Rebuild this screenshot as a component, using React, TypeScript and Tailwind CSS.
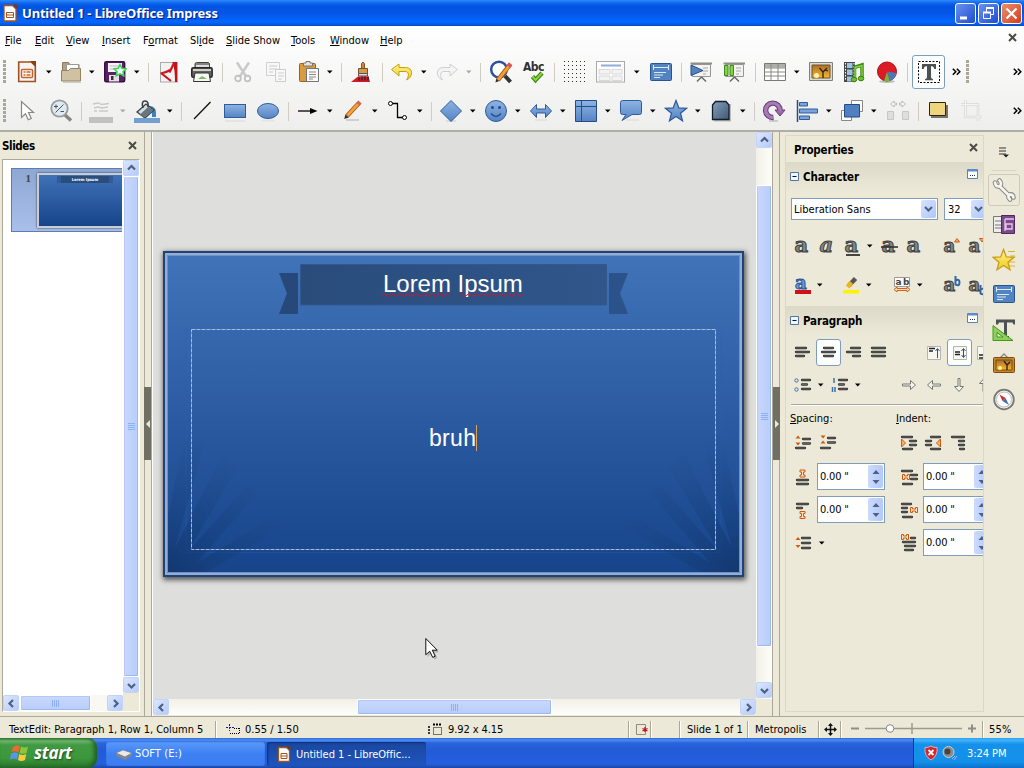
import React from "react";

type IconProps = { w?: number; h?: number; children: React.ReactNode };
const S = ({ w = 24, h = 24, children }: IconProps) => (
  <svg width={w} height={h} viewBox={`0 0 ${w} ${h}`} fill="none" className="block shrink-0">
    {children}
  </svg>
);

const BL = "url(#gBlue)";
const ST = "#2f5d9b";

const Defs = () => (
  <svg width="0" height="0" className="absolute">
    <defs>
      <linearGradient id="gBlue" x1="0" y1="0" x2="0" y2="1">
        <stop offset="0" stopColor="#8fb4e3" />
        <stop offset="1" stopColor="#5483c4" />
      </linearGradient>
      <linearGradient id="gDark" x1="0" y1="0" x2="1" y2="1">
        <stop offset="0" stopColor="#85a0bd" />
        <stop offset="1" stopColor="#3f5872" />
      </linearGradient>
      <linearGradient id="gSun" x1="0" y1="0" x2="0" y2="1">
        <stop offset="0" stopColor="#a8702c" />
        <stop offset="1" stopColor="#fbb62c" />
      </linearGradient>
      <linearGradient id="gYellow" x1="0" y1="0" x2="0" y2="1">
        <stop offset="0" stopColor="#fdf48a" />
        <stop offset="1" stopColor="#f0cb22" />
      </linearGradient>
    </defs>
  </svg>
);

const Grip = () => (
  <S w={3} h={24}>
    {[0, 4, 8, 12, 16, 20].map((y) => (
      <rect key={y} x="0" y={y} width="3" height="3" fill="#aaa796" />
    ))}
  </S>
);
const Arr = ({ dim }: { dim?: boolean }) => (
  <S w={6} h={4}>
    <path d="M0 .5h5.5L2.75 3.5z" fill={dim ? "#aca899" : "#000"} />
  </S>
);
const Sep = () => <div className="h-[19px] w-px bg-[#d0cdc0]" />;
const More = () => (
  <S w={9} h={8}>
    <path d="M.8.8 3.8 3.8.8 6.8M4.8.8l3 3-3 3" stroke="#000" strokeWidth="1.5" />
  </S>
);

const DocIcon = () => (
  <S>
    <path d="M3.7 2h12.6l4 4v15.500H3.700z" fill="#f7f5f3" stroke="#a1501f" strokeWidth="1.6" />
    <path d="M15 1h6v6z" fill="#8a3f12" />
    <rect x="6.500" y="9.500" width="11" height="8" rx="1" fill="#fff" stroke="#c5632a" strokeWidth="1.500" />
    <path d="M8.500 12h2m1 0h4M8.500 15h2m1 0h4" stroke="#c5632a" strokeWidth="1.600" />
  </S>
);
const FolderIcon = () => (
  <S>
    <path d="M3.500 20V2.500h6l1.500 2h9V9" fill="#b3a182" stroke="#8b7a5e" />
    <path d="M7.500 10V4.500h12V10" fill="#fff" stroke="#999" />
    <path d="M2.500 10.500h7l2-2h10v12.500h-19z" fill="#d0c1a2" stroke="#95835f" />
    <path d="M4 22.500h18" stroke="#ccc" />
  </S>
);
const SaveIcon = () => (
  <S>
    <rect x="1.700" y="1.700" width="20" height="20" rx="1.500" fill="#5b2168" stroke="#38103f" strokeWidth="1.400" />
    <rect x="5" y="3" width="14" height="9" fill="#f7f2f8" />
    <path d="M6.500 6h9M6.500 9h8" stroke="#bbb" />
    <rect x="6" y="15" width="10" height="6.500" fill="#e4dfe6" />
    <rect x="8" y="16" width="2.500" height="4" fill="#333" />
    <path d="m17 4.500 2 3.800 4 .6-2.900 2.800.7 4.100-3.800-1.900-3.700 1.900.7-4.100-2.800-2.800 4-.6z" fill="#f2fff2" stroke="#40cf5c" strokeWidth="1.600" />
  </S>
);
const PdfIcon = () => (
  <S>
    <rect x="3.500" y="2.500" width="17" height="19.500" fill="#f2f2f1" stroke="#aaa" />
    <path d="M15.500 2h4.500v20h-2C18 14 17.500 8 15.500 2z" fill="#c50f19" />
    <path d="m17 3-4.500 9.500M3.500 13.500c4-.5 7-1.800 9.500-3.500M4 13l10 8" stroke="#cc1721" strokeWidth="2.200" />
  </S>
);
const PrintIcon = () => (
  <S>
    <path d="m5 3.500 1.500-1h11.500l1.500 1V9h-14.500z" fill="#85857f" stroke="#454540" />
    <path d="M6 6h13" stroke="#ddd" strokeWidth="2" />
    <rect x="1.700" y="7.700" width="20.500" height="9.500" rx="1.500" fill="#636460" stroke="#272826" strokeWidth="1.400" />
    <path d="M3 10h18" stroke="#d1d1cb" strokeWidth="2" />
    <path d="M5 13h14l1.500 8.500h-17z" fill="#f5f7f3" stroke="#333" />
    <path d="m8 19 4-3 5 3z" fill="#83b56b" />
  </S>
);
const CutIcon = () => (
  <S>
    <path d="M6 2.500 15.500 17M18 2.500 8.500 17" stroke="#c9c9c9" strokeWidth="2.500" />
    <circle cx="7" cy="18.500" r="2.800" stroke="#c0c0c0" strokeWidth="1.700" />
    <circle cx="16.500" cy="18.500" r="2.800" stroke="#c0c0c0" strokeWidth="1.700" />
  </S>
);
const CopyIcon = () => (
  <S>
    <path d="M2.500 2.500h13v13h-13z" fill="#f8f8f8" stroke="#d0d0d0" />
    <path d="M5 6h8M5 9h8M5 12h4" stroke="#ccc" />
    <path d="M11.500 9.500h10v12h-10z" fill="#f8f8f8" stroke="#ccc" />
    <path d="M14 13h6M14 16h6M14 19h4" stroke="#ccc" />
  </S>
);
const PasteIcon = () => (
  <S>
    <rect x="2.500" y="3.500" width="16" height="18" rx="1" fill="#d99b42" stroke="#9a6118" />
    <path d="M6.500 6V3h2.500V1.500h4V3h2.500v3z" fill="#e4e4e1" stroke="#777" />
    <path d="M9.500 8.500h12v13h-12z" fill="#fafafa" stroke="#73736f" />
    <path d="M12 12h7M12 14.500h7M12 17h7M12 19h4" stroke="#888" />
  </S>
);
const BrushIcon = () => (
  <S>
    <path d="M11.500 8V3.500q1.500-3 3 0V8" fill="#c48d3c" stroke="#855719" />
    <path d="M8.500 8.500h9v5h-9z" fill="#d39c49" stroke="#795021" />
    <path d="M8.500 13.500h9v2.500h-9z" fill="#dedede" stroke="#555" />
    <path d="m8 16.500-7 5.500h19l-1.500-5.500z" fill="#d51823" />
    <path d="M9 17.500v3m3-4v4m3-4v4m3-4v4" stroke="#44212a" strokeWidth="1.500" />
  </S>
);
const UndoIcon = ({ dim }: { dim?: boolean }) => (
  <S>
    <g transform={dim ? "translate(24 0) scale(-1 1)" : undefined}>
      <path
        d="M9 3.500 1.500 9 9 15.500V11h6c4 0 4.500 4 1.500 8.500 7-3 7-12.500-1-12.500H9z"
        transform="translate(0 .5)"
        fill={dim ? "#f4f4f4" : "url(#gYellow)"}
        stroke={dim ? "#cecece" : "#c59e13"}
      />
    </g>
  </S>
);
const FindIcon = () => (
  <S>
    <path d="m16 16 5.500 6" stroke="#343434" strokeWidth="4" />
    <circle cx="10" cy="9.500" r="7.800" fill="#fff" stroke="#304f9b" strokeWidth="2.500" />
    <path d="M9 20 21.500 4" stroke="#af5f15" strokeWidth="4.500" />
    <path d="M9 20 20 6" stroke="#f7a03b" strokeWidth="2.800" />
    <path d="m19.500 6.500 2.200-2.800" stroke="#e0545b" strokeWidth="4" />
    <path d="m6.500 22.500.7-4 3 2.500z" fill="#333" />
  </S>
);
const AbcIcon = () => (
  <div className="relative h-6 w-6">
    <span className="absolute left-px top-[1px] font-['DejaVu_Sans_Condensed','DejaVu_Sans',sans-serif] text-[12px] leading-3 font-bold tracking-[-0.5px] text-[#333]">Abc</span>
    <span className="absolute left-0 top-0">
      <S>
        <path d="m10.500 16.500 3 3.500 6.500-7" stroke="#39850c" strokeWidth="4.300" />
        <path d="m10.500 16.500 3 3.500 6.500-7" stroke="#8ad544" strokeWidth="2" />
      </S>
    </span>
  </div>
);
const GridIcon = () => (
  <S>
    {[1, 5, 9, 13, 17, 21].map((y) => [1, 5, 9, 13, 17, 21].map((x) => <rect key={`${x}-${y}`} x={x} y={y} width="1" height="1" fill="#30312f" />))}
  </S>
);
const LayoutIcon = () => (
  <S w={30}>
    <rect x="1.500" y="1.500" width="28" height="20.500" fill="#fdfdfd" stroke="#aaa" />
    <path d="M6 5.500h20" stroke="#8fadd6" strokeWidth="2" />
    <path d="M4 9.500h11V14H4zM17 9.500h10V14H17zM4 16h11v4.500H4zM17 16h10v4.500H17z" fill="#f3f3f3" stroke="#d8d8d8" />
  </S>
);
const TextBoxIcon = () => (
  <S>
    <rect x="1.500" y="3.500" width="21" height="17" rx="1" fill="#5283c2" stroke="#29548f" />
    <path d="M4.500 7.500h15M4.500 5v5M19.500 5v5" stroke="#dce9f8" />
    <path d="M5 12.500h12M5 15h9M5 17.500h6" stroke="#dce9f8" />
  </S>
);
const Board = ({ green }: { green?: boolean }) => (
  <S>
    <path d="M1.500 3.500h21.500" stroke="#8c8c88" strokeWidth="2" />
    <path d="M3.500 4.500h18v12h-18z" fill="#f3f3f2" stroke="#969692" />
    <path d="M14 8h5M14 11h5M14 14h3" stroke="#aaa" />
    <path d="m12.500 17-4.500 4.500M12.500 17l4.500 4.500" stroke="#6b6b68" strokeWidth="1.500" />
    {green ? (
      <path d="M2.500 5.500h3.500v10h-3.500zM8 5.500h3.500v10H8z" fill="#86d14a" stroke="#3d8c15" />
    ) : (
      <path d="m2 5 12 5.500-12 5z" fill="#5182c2" stroke="#264f88" />
    )}
  </S>
);
const TableIcon = () => (
  <S>
    <path d="M1.500 3.500h21v17h-21z" fill="#fff" stroke="#777773" />
    <path d="M2 4h20v3.500H2z" fill="#aeaea9" />
    <path d="M1.500 8h21M1.500 12h21M1.500 16h21M8 4v17M15 4v17" stroke="#888884" />
  </S>
);
const ImageIcon = () => (
  <S>
    <path d="M.5 2.500h23v18H.5z" fill="#d9d9d7" stroke="#80807c" />
    <path d="M3 5h18v13H3z" fill="url(#gSun)" stroke="#705227" />
    <circle cx="7.500" cy="15.500" r="2.500" fill="#fff3a2" />
    <path d="M14 18v-6l-3.500-4M14 12l4-4M16 10l3 1" stroke="#2b2113" strokeWidth="1.300" />
  </S>
);
const FilmIcon = () => (
  <S>
    <path d="M2 2h11v20H2z" fill="#45494b" />
    <path d="M5 3h5.500v5H5zM5 9.500h5.500v5.500H5zM5 16.500h5.500v5H5z" fill="#9cc3df" />
    <path d="M3.500 3v18M12 3v18" stroke="#fff" strokeDasharray="1.500 1.500" />
    <path d="M12 7.500 20 5v13" stroke="#3e8a12" strokeWidth="3.500" />
    <path d="M13 8v11" stroke="#3e8a12" strokeWidth="2.500" />
    <path d="m12.500 7.500 7.500-2V18M13 8v11" stroke="#8cd44b" strokeWidth="1.300" />
    <ellipse cx="12" cy="19.500" rx="2.800" ry="2.300" fill="#72bc33" stroke="#39800f" />
    <ellipse cx="19" cy="18.500" rx="2.800" ry="2.300" fill="#72bc33" stroke="#39800f" />
  </S>
);
const ChartIcon = () => (
  <S>
    <ellipse cx="12" cy="21.500" rx="8" ry="1.500" fill="#bbb" />
    <circle cx="12" cy="11.500" r="9.500" fill="#dc1b24" stroke="#a81018" />
    <path d="m12 11.500 9.500 1.500q-1 6-6.500 7.800z" fill="#4a78b8" />
    <path d="m12 12 3 9.200q-3 .8-6-.2z" fill="#6fb83c" />
  </S>
);
const TButton = () => (
  <div className="flex h-[34px] w-[33px] items-center justify-center rounded-[3px] border border-[#7b9ebd] bg-white">
    <S>
      <rect x="1.500" y="1.500" width="21" height="21" stroke="#000" strokeDasharray="2 1.500" />
      <path d="M5 4h14v5h-1.700q-.3-2.700-2.300-2.700h-1V17q0 2 2 2.200v1H8v-1q2-.2 2-2.200V6.300H9Q7 6.300 6.700 9H5z" fill="#4d5051" />
    </S>
  </div>
);

const PointerIcon = () => (
  <S>
    <path d="M5.500 2.500v16l4-3.700 2.800 6 3-1.300-2.800-6h5z" fill="#fff" stroke="#878787" strokeWidth="1.200" />
  </S>
);
const ZoomIcon = () => (
  <S>
    <path d="m16 16 6 5.500" stroke="#858585" strokeWidth="3.500" />
    <circle cx="10.500" cy="9.500" r="8.200" fill="#dceaf6" stroke="#9b9b98" strokeWidth="1.800" />
    <path d="M5 7.500h4M7 5.500v4M6.500 13.500l8-8M11.500 12.500H15" stroke="#555" />
  </S>
);
const LineColor = () => (
  <S>
    <path d="m4 5 5-1 4 1.500 7-1M5 9l4-1 4 1 6-1M5 12h3m2 0h9" stroke="#c9c9c9" strokeWidth="1.300" />
    <path d="M0 18h24v6H0z" fill="#c1c1c1" />
  </S>
);
const BucketIcon = () => (
  <S w={26}>
    <path d="M16 7q7 0 6 11h-4q1-8-5-9z" fill="#3683bd" />
    <path d="m3 13 9-8 8 6-9 8z" fill="#d5dcdf" stroke="#37434a" strokeWidth="1.300" />
    <path d="m6 15.500 8.500-8 5 4-9 7z" fill="#667780" />
    <path d="M9 9q-2-7 2-7 4 0 3 6" stroke="#2f383e" strokeWidth="1.500" />
    <path d="M0 19h26v5.500H0z" fill="#729fcf" />
  </S>
);
const PencilIcon = () => (
  <S>
    <path d="M5 21h13" stroke="#c4c4c4" strokeWidth="1.500" />
    <path d="m6 17 12-13" stroke="#a95d16" strokeWidth="4.600" />
    <path d="M6.500 16.500 17 5" stroke="#f7a13d" strokeWidth="2.700" />
    <path d="m17.200 5 1.800-2" stroke="#e25b5f" strokeWidth="4.300" />
    <path d="m3.200 20 1.200-4.500 3.400 3.100z" fill="#363028" />
  </S>
);
const SparkStar = ({ fill, stroke }: { fill: string; stroke: string }) => (
  <path d="m12 1.500 2.800 7.400 7.700.4-6 4.900 2 7.500-6.500-4.200-6.500 4.200 2-7.500-6-4.900 7.700-.4z" fill={fill} stroke={stroke} strokeWidth="1.300" />
);
const RotateIcon = () => (
  <S>
    <path d="M7 22h9" stroke="#ccc" strokeWidth="2" />
    <path d="M11.500 18.500A7.200 7.200 0 1 1 18 11.500" stroke="#68397a" strokeWidth="5.400" />
    <path d="M13 11h10l-5 6z" fill="#9a6aa6" stroke="#68397a" />
    <path d="M11 18.500A7.200 7.200 0 1 1 18 12" stroke="#a87bb4" strokeWidth="3.400" />
  </S>
);

type Item = [string, React.ReactNode];

const row1: Item[] = [
  ["ml-[3px]", <Grip />], ["ml-[9px]", <DocIcon />], ["ml-[7px]", <Arr />], ["ml-[7px]", <FolderIcon />], ["ml-[6px]", <Arr />],
  ["ml-[8px]", <SaveIcon />], ["ml-[7px]", <Arr />], ["ml-[8px]", <Sep />], ["ml-[8px]", <PdfIcon />], ["ml-[9px]", <PrintIcon />],
  ["ml-[8px]", <Sep />], ["ml-[8px]", <CutIcon />], ["ml-[9px]", <CopyIcon />], ["ml-[9px]", <PasteIcon />], ["ml-[6px]", <Arr />],
  ["ml-[8px]", <Sep />], ["ml-[8px]", <BrushIcon />], ["ml-[8px]", <Sep />], ["ml-[7px]", <UndoIcon />], ["ml-[7px]", <Arr />],
  ["ml-[8px]", <UndoIcon dim />], ["ml-[7px]", <Arr dim />], ["ml-[8px]", <Sep />], ["ml-[8px]", <FindIcon />], ["ml-[9px]", <AbcIcon />],
  ["ml-[8px]", <Sep />], ["ml-[8px]", <GridIcon />], ["ml-[8px]", <LayoutIcon />], ["ml-[9px]", <Arr />], ["ml-[9px]", <TextBoxIcon />],
  ["ml-[8px]", <Sep />], ["ml-[7px]", <Board />], ["ml-[9px]", <Board green />], ["ml-[9px]", <Sep />], ["ml-[7px]", <TableIcon />],
  ["ml-[7px]", <Arr />], ["ml-[9px]", <ImageIcon />], ["ml-[9px]", <FilmIcon />], ["ml-[9px]", <ChartIcon />], ["ml-[8px]", <Sep />],
  ["ml-[4px]", <TButton />], ["ml-[7px]", <More />], ["ml-[5px]", <Grip />], ["ml-[44px]", <More />],
];

const row2: Item[] = [
  ["ml-[3px]", <Grip />],
  ["ml-[10px]", <PointerIcon />],
  ["ml-[9px]", <ZoomIcon />],
  ["ml-[8px]", <Sep />],
  ["ml-[7px]", <LineColor />],
  ["ml-[7px]", <Arr dim />],
  ["ml-[8px]", <BucketIcon />],
  ["ml-[7px]", <Arr />],
  ["ml-[8px]", <Sep />],
  ["ml-[8px]", <S><path d="M4 20 20.500 3" stroke="#111" strokeWidth="1.300" /></S>],
  ["ml-[9px]", <S><path d="M2 22h20" stroke="#e4e4e4" strokeWidth="2" /><rect x="1.500" y="5.500" width="21" height="13" fill={BL} stroke={ST} /></S>],
  ["ml-[9px]", <S><path d="M5 21.500h14" stroke="#e4e4e4" strokeWidth="2" /><ellipse cx="12" cy="12" rx="10.500" ry="7.500" fill={BL} stroke={ST} /></S>],
  ["ml-[8px]", <Sep />],
  ["ml-[6px]", <S><path d="M3 12h13" stroke="#000" strokeWidth="1.300" /><path d="m15 9 7.500 3-7.500 3z" fill="#000" /></S>],
  ["ml-[8px]", <Arr />],
  ["ml-[8px]", <PencilIcon />],
  ["ml-[7px]", <Arr />],
  ["ml-[8px]", <S><path d="M5 4.500h6.500v14H17" stroke="#000" strokeWidth="1.300" /><circle cx="4.500" cy="4.500" r="2" fill="#fff" stroke="#000" /><circle cx="18.500" cy="18.500" r="2" fill="#fff" stroke="#000" /></S>],
  ["ml-[7px]", <Arr />],
  ["ml-[8px]", <Sep />],
  ["ml-[7px]", <S><path d="M7 22h10" stroke="#ddd" strokeWidth="2" /><path d="M12 1.500 22.500 12 12 22.500 1.500 12z" fill={BL} stroke={ST} /></S>],
  ["ml-[7px]", <Arr />],
  ["ml-[8px]", <S><circle cx="12" cy="12" r="10.500" fill={BL} stroke={ST} /><path d="M7 14.500q5 6 10 0" stroke="#234c86" strokeWidth="1.300" /><circle cx="8.500" cy="8.500" r="1.500" fill="#234c86" /><circle cx="15.500" cy="8.500" r="1.500" fill="#234c86" /></S>],
  ["ml-[7px]", <Arr />],
  ["ml-[8px]", <S><path d="M6 21h12" stroke="#e4e4e4" strokeWidth="2" /><path d="m1.500 12 6-6.500V10h9V5.500l6 6.500-6 6.500V14h-9v4.500z" fill={BL} stroke={ST} /></S>],
  ["ml-[7px]", <Arr />],
  ["ml-[8px]", <S><path d="M1.500 1.500h21v21h-21z" fill={BL} stroke="#244d86" /><path d="M7.500 1.500v21M1.500 7.500h21" stroke="#244d86" /></S>],
  ["ml-[7px]", <Arr />],
  ["ml-[8px]", <S><path d="M7 21h13" stroke="#e4e4e4" strokeWidth="2" /><path d="M3.500 1.500h17q2 0 2 2v10q0 2-2 2H13L3 21.500l4-6H3.500q-2 0-2-2v-10q0-2 2-2z" fill={BL} stroke={ST} /></S>],
  ["ml-[7px]", <Arr />],
  ["ml-[8px]", <S><SparkStar fill={BL} stroke={ST} /></S>],
  ["ml-[7px]", <Arr />],
  ["ml-[8px]", <S><path d="M5 21.500h16V5" stroke="#bbb" strokeWidth="2" /><path d="m3.500 6 3-3.500H17l3 3.500v14.500H3.500z" fill="url(#gDark)" stroke="#111d28" strokeWidth="1.300" /></S>],
  ["ml-[7px]", <Arr />],
  ["ml-[8px]", <Sep />],
  ["ml-[7px]", <RotateIcon />],
  ["ml-[9px]", <S><path d="M2.500 1v22" stroke="#244d86" strokeWidth="1.500" /><path d="M4.500 3.500h8v3.500h-8zM4.500 10h18v4h-18zM4.500 17h10v3.500h-10z" fill="#7aa4da" stroke={ST} /></S>],
  ["ml-[7px]", <Arr />],
  ["ml-[8px]", <S><path d="M11.500 1.500h11v11h-11zM1.500 11.500h10v10h-10z" fill="#fff" stroke="#888" /><path d="M4.500 5.500h15v12.500h-15z" fill="#4f80c1" stroke="#234b84" /></S>],
  ["ml-[7px]", <Arr />],
  ["ml-[9px]", <S><path d="M1.500 12.500h6v8h-6zM16.500 12.500h6v8h-6z" fill="#dedede" stroke="#c7c7c7" /><path d="m4.500 5 3.500-3v2h2.500v2H8v2zM19.500 5 16 2v2h-2.500v2H16v2z" fill="#f6f6f6" stroke="#bbb" /></S>],
  ["ml-[8px]", <Sep />],
  ["ml-[7px]", <S><path d="M5 6h17v13H5z" fill="#77736b" /><path d="M3.500 3.500h16v13h-16z" fill="#efd57c" stroke="#28231a" /></S>],
  ["ml-[10px]", <S><path d="M5.500 1v17H22M1 5.500h17V22" stroke="#d7d7d7" strokeWidth="2.500" /><path d="M5.500 1v17H22M1 5.500h17V22" stroke="#f5f5f5" /></S>],
  ["ml-[29px]", <More />],
];

const Row = ({ items }: { items: Item[] }) => (
  <>
    {items.map(([c, n], i) => (
      <div key={i} className={`${c} shrink-0`}>
        {n}
      </div>
    ))}
  </>
);

const CloseX = () => (
  <S w={9} h={9}>
    <path d="m1 1 7 7M8 1 1 8" stroke="#4b4a45" strokeWidth="2" />
  </S>
);

const SBtn = ({ d }: { d: "up" | "down" | "left" | "right" }) => {
  const p = { up: "m4 8.500 3.500-3.500L11 8.500", down: "M4 6l3.500 3.500L11 6", left: "M9 4 5.500 7.500 9 11", right: "m6 4 3.500 3.500L6 11" }[d];
  return (
    <div className="flex h-4 w-4 shrink-0 items-center justify-center rounded-[2px] border border-[#c3d3f6] bg-gradient-to-br from-[#dce6fe] to-[#b4cbfa]">
      <S w={15} h={15}>
        <path d={p} stroke="#4d6185" strokeWidth="2.200" />
      </S>
    </div>
  );
};
const ThumbV = ({ c }: { c: string }) => (
  <div className={`${c} flex shrink-0 items-center justify-center rounded-[2px] border border-white bg-gradient-to-r from-[#c9d8fd] to-[#b8cdfb] shadow-[inset_-1px_-1px_0_#9cb8ec,inset_1px_0_0_#b3c8f5]`}>
    <div className="flex flex-col gap-px">
      <div className="h-px w-[7px] bg-[#8cb0f8]" /><div className="h-px w-[7px] bg-[#8cb0f8]" /><div className="h-px w-[7px] bg-[#8cb0f8]" /><div className="h-px w-[7px] bg-[#8cb0f8]" />
    </div>
  </div>
);
const ThumbH = ({ c }: { c: string }) => (
  <div className={`${c} flex h-4 shrink-0 items-center justify-center rounded-[2px] border border-white bg-gradient-to-b from-[#c9d8fd] to-[#b8cdfb] shadow-[inset_-1px_-1px_0_#9cb8ec,inset_1px_1px_0_#b3c8f5]`}>
    <div className="flex gap-px">
      <div className="h-[7px] w-px bg-[#8cb0f8]" /><div className="h-[7px] w-px bg-[#8cb0f8]" /><div className="h-[7px] w-px bg-[#8cb0f8]" /><div className="h-[7px] w-px bg-[#8cb0f8]" />
    </div>
  </div>
);

const menus: [string, string, string, string][] = [
  ["w-[30px]", "", "F", "ile"], ["w-[31px]", "", "E", "dit"], ["w-[36px]", "", "V", "iew"], ["w-[41px]", "", "I", "nsert"],
  ["w-[47px]", "F", "o", "rmat"], ["w-[36px]", "Sl", "i", "de"], ["w-[65px]", "", "S", "lide Show"], ["w-[39px]", "", "T", "ools"],
  ["w-[50px]", "", "W", "indow"], ["w-[40px]", "", "H", "elp"],
];

const Rays = () => (
  <path
    d="M5 321V263L22 187 45 179 12 297 61 201 75 216 24 302 84 234 95 241 34 312 110 266 124 274 44 321z"
    fill="url(#gRay)"
  />
);

const SlideArt = () => (
  <svg width="581" height="326" viewBox="0 0 581 326" className="absolute left-0 top-0">
    <defs>
      <radialGradient id="gRay" gradientUnits="userSpaceOnUse" cx="5" cy="321" r="145">
        <stop offset="0" stopColor="#12366b" stopOpacity=".85" />
        <stop offset=".4" stopColor="#143c76" stopOpacity=".42" />
        <stop offset=".75" stopColor="#18427f" stopOpacity=".16" />
        <stop offset="1" stopColor="#1b478a" stopOpacity="0" />
      </radialGradient>
      <linearGradient id="gRib" x1="0" y1="0" x2="1" y2="0">
        <stop offset="0" stopColor="#294c7b" />
        <stop offset="1" stopColor="#30568b" />
      </linearGradient>
    </defs>
    <path d="M23 76V302M558 76V302M23 301.500H558" stroke="#2b62b2" strokeOpacity=".35" />
    <Rays />
    <g transform="translate(581 0) scale(-1 1)"><Rays /></g>
    <path d="M137.500 13.500h306v40.500h-306z" fill="url(#gRib)" stroke="#31598f" />
    <path d="M116 22h19v41h-19l8-20.500z" fill="#26497a" />
    <path d="M446 22h19l-8 20.500 8 20.500h-19z" fill="#2c5389" />
    <rect x="28.500" y="78.500" width="524" height="220" stroke="#a8bdd8" strokeDasharray="4 1" fill="none" />
  </svg>
);

const Slide = () => (
  <div className="relative h-[326px] w-[581px] bg-gradient-to-b from-[#4174b9] via-[#2c5ba1] to-[#16448a] shadow-[1px_2px_5px_1px_rgba(0,0,0,0.6)]">
    <SlideArt />
    <div className="absolute inset-0 border-2 border-[#1f4378] shadow-[inset_0_0_0_2px_#94add5,inset_0_0_0_3px_#6f90c5]" />
    <div className="absolute left-[220px] top-[19px] font-['Liberation_Sans',Arial,sans-serif] text-[24px] leading-[28px] tracking-[-0.03px] whitespace-nowrap text-white">Lorem Ipsum</div>
    <svg width="142" height="4" className="absolute left-[219px] top-[42px]">
      <path d={"M0 2" + "q2-3 4 0t4 0".repeat(8) + "q2-3 4 0"} fill="none" stroke="#d4142a" />
      <path d={"M77 2" + "q2-3 4 0t4 0".repeat(8)} fill="none" stroke="#d4142a" />
    </svg>
    <div className="absolute left-[266px] top-[173px] font-['Liberation_Sans',Arial,sans-serif] text-[23px] leading-[28px] tracking-[0.3px] whitespace-nowrap text-white">bruh</div>
    <div className="absolute left-[313px] top-[174px] h-[26px] w-px bg-[#dfa355]" />
  </div>
);

const Hdr = ({ t }: { t: string }) => (
  <div className="flex h-[29px] items-center bg-gradient-to-b from-[#dcd9c9] to-[#ece9d8] pl-[4px]">
    <S w={9} h={9}>
      <path d="M.5.5h8v8h-8z" fill="#f1f5fc" stroke="#53749f" /><path d="M2.500 4.500h4" stroke="#111" />
    </S>
    <span className="ml-[4px] w-[164px] text-[11.5px] font-bold tracking-[-0.15px]">{t}</span>
    <div className="mb-[5px]">
      <S w={11} h={10}>
        <path d="M.5.5h10v9H.5z" fill="#fff" stroke="#5d82b5" /><path d="M1 1.500h9" stroke="#5d8ed0" strokeWidth="2" /><path d="M3 6.500h1m1 0h1m1 0h1" stroke="#234" />
      </S>
    </div>
  </div>
);

const A = ({ kind }: { kind?: string }) => {
  const narrow = kind === "sup" || kind === "sub";
  return (
    <S w={22} h={24}>
      <g fontFamily="'DejaVu Serif', serif" fontWeight="bold" fill="#858782" stroke="#3f413f" strokeWidth="1">
        <text x={narrow ? 0.5 : 2.500} y="18" fontSize={kind === "up" || kind === "dn" || narrow ? 18 : 21} fontStyle={kind === "i" ? "italic" : undefined}>a</text>
      </g>
      {kind === "u" && <path d="M4 21h14" stroke="#333" strokeWidth="1.800" />}
      {kind === "s" && <path d="M2 13h17" stroke="#333" strokeWidth="1.600" />}
      {kind === "up" && <path d="m13.500 8 2.500-3.500L18.500 8z" fill="#f5ad70" stroke="#ce5f16" />}
      {kind === "dn" && <path d="m13.500 4.500L16 8l2.500-3.500z" fill="#f5ad70" stroke="#ce5f16" />}
      {narrow && (
        <path
          d="M13 0v9M13 4.500q4-2 4 2t-4 2"
          transform={kind === "sup" ? "translate(-.5 3)" : "translate(-.5 12)"}
          stroke="#3465a4"
          strokeWidth="2"
        />
      )}
    </S>
  );
};
const ACol = () => (
  <S w={22} h={24}>
    <text x="3" y="16" fontSize="18" fontFamily="'DejaVu Serif', serif" fontWeight="bold" fill="#6c9bd6" stroke="#28569a" strokeWidth="1">a</text>
    <path d="M3 17h16v4H3z" fill="#d01218" />
  </S>
);
const Hi = () => (
  <S w={22} h={24}>
    <path d="m9 12.500 6.500-7" stroke="#555" strokeWidth="4.500" /><path d="m7.500 14 4-4.500" stroke="#ebb51c" strokeWidth="4.500" /><path d="M3 17h16v3.500H3z" fill="#fff200" />
  </S>
);
const AB = () => (
  <S w={22} h={24}>
    <path d="M3.500 4.500h15v9h-15z" fill="#fff" stroke="#999" />
    <text x="4.500" y="12" fontSize="9" fontWeight="bold" fontFamily="'DejaVu Sans', sans-serif" fill="#444">a</text>
    <text x="12" y="12" fontSize="9" fontWeight="bold" fontFamily="'DejaVu Sans', sans-serif" fill="#444">b</text>
    <path d="m3 16.500 3-2.500v1.500h10V14l3 2.500-3 2.500v-1.500H6V19z" fill="#fbd7b5" stroke="#cf651a" />
  </S>
);
const Bars = ({ d, children, w = 20 }: { d: string; children?: React.ReactNode; w?: number }) => (
  <S w={w} h={20}>
    <path d={d} stroke="#30312f" strokeWidth="2.300" strokeLinecap="round" />
    <path d={d} stroke="#787a75" strokeWidth=".7" strokeLinecap="round" />
    {children}
  </S>
);
const O = "#cc5c12";
const Combo = ({ c, t, b }: { c: string; t: string; b: string }) => (
  <div className={`${c} flex h-[22px] shrink-0 items-center justify-between border border-[#7f9db9] bg-white pr-px pl-[2px]`}>
    <span className={b}>{t}</span>
    <div className="flex h-[18px] w-[15px] items-center justify-center rounded-[2px] bg-gradient-to-br from-[#d8e3fd] to-[#aec6f7]">
      <S w={9} h={6}><path d="m1 1 3.500 3.500L8 1" stroke="#4d6185" strokeWidth="2.100" /></S>
    </div>
  </div>
);
const Spin = () => (
  <div className="flex h-[27px] w-[68px] shrink-0 items-center justify-between border border-[#7f9db9] bg-white pr-px pl-[2px]">
    <span className="pt-px tracking-[-0.2px]">0.00 "</span>
    <div className="flex h-[23px] w-[15px] flex-col items-center justify-center gap-[6px] rounded-[2px] bg-gradient-to-r from-[#ccdafd] to-[#b3c9f8]">
      <S w={8} h={4}><path d="M4 0 7.500 4h-7z" fill="#4d6185" /></S>
      <S w={8} h={4}><path d="M.5 0h7L4 4z" fill="#4d6185" /></S>
    </div>
  </div>
);
const ArrowG = ({ r }: { r: string }) => (
  <S w={16} h={16}>
    <path d="M1.500 7h8V3.500L14.500 8l-5 4.500V9h-8z" transform={r} fill="#f5f4ee" stroke="#777871" />
  </S>
);
const VBox = ({ k }: { k: number }) => (
  <S w={16} h={18}>
    <path d="M1.500 2.500h13v13h-13z" fill="#f7f6f1" stroke="#b5b4ae" />
    <path d={k === 0 ? "M3 4.500h6M3 7h4" : k === 1 ? "M3 8h5M3 10.500h5" : "M3 11h6M3 14h6"} stroke="#222" strokeWidth="1.500" />
    <path d={k === 0 ? "M11.500 14V5m-2 2 2-2.500 2 2.500" : "M11.500 5v8m-2-6 2-2.500 2 2.500m-4 4 2 2.500 2-2.500"} stroke="#24568b" />
  </S>
);
const SelBox = ({ children }: { children: React.ReactNode }) => (
  <div className="flex h-[27px] w-[25px] shrink-0 items-center justify-center rounded-[3px] border border-[#7b9ebd] bg-white">{children}</div>
);
const IBeam = ({ t }: { t: string }) => (
  <path d="M-2 0h5v2h-1.500v3H3v2h-5V5h1.500V2H-2z" transform={t} fill="#fae0c5" stroke={O} />
);

const Sidebar = () => (
  <div className="mt-[3px] ml-[5px] flex h-[577px] w-[199px] shrink-0 flex-col overflow-hidden border border-[#dbd8c9] bg-[#ece9d8]">
    <div className="flex h-[26px] shrink-0 items-center pl-[8px]">
      <span className="w-[175px] pt-[2px] text-[11.5px] font-bold tracking-[-0.15px]">Properties</span>
      <div className="mb-1"><CloseX /></div>
    </div>
    <Hdr t="Character" />
    <div className="mt-[7px] flex pl-[5px]">
      <Combo c="w-[147px]" t="Liberation Sans" b="pt-px tracking-[0px]" />
      <Combo c="ml-[6px] w-[44px]" t="32" b="pt-px pl-[1px]" />
    </div>
    <div className="mt-[14px] flex h-6 items-center pl-[6px]">
      <A /><div className="ml-[3px]"><A kind="i" /></div><div className="ml-[3px]"><A kind="u" /></div><div className="ml-[3px]"><Arr /></div>
      <div className="ml-[6px]"><A kind="s" /></div><div className="ml-[3px]"><A /></div><div className="ml-[15px]"><A kind="up" /></div><div className="ml-[3px]"><A kind="dn" /></div>
    </div>
    <div className="mt-[15px] flex h-6 items-center pl-[6px]">
      <ACol /><div className="ml-[3px]"><Arr /></div><div className="ml-[17px]"><Hi /></div><div className="ml-[4px]"><Arr /></div>
      <div className="ml-[19px]"><AB /></div><div className="ml-[4px]"><Arr /></div><div className="ml-[20px]"><A kind="sup" /></div><div className="ml-[3px]"><A kind="sub" /></div>
    </div>
    <div className="mt-[9px]"><Hdr t="Paragraph" /></div>
    <div className="mt-[4px] flex h-[27px] items-center pl-[7px]">
      <Bars d="M3 5h10M3 9h13M3 13h8" />
      <div className="ml-[3px]"><SelBox><Bars d="M5 5h9M3 9h13M5 13h9" /></SelBox></div>
      <div className="ml-[3px]"><Bars d="M7 5h9M3 9h13M9 13h7" /></div>
      <div className="ml-[5px]"><Bars d="M3 5h13M3 9h13M3 13h13" /></div>
      <div className="ml-[37px]"><VBox k={0} /></div><div className="ml-[5px]"><SelBox><VBox k={1} /></SelBox></div><div className="ml-[4px]"><VBox k={2} /></div>
    </div>
    <div className="mt-[7px] flex h-6 items-center pl-[7px]">
      <Bars d="M9 5h8M9 9.500h5M9 14h8"><circle cx="3.500" cy="5.500" r="1.700" stroke="#3c70b5" /><circle cx="3.500" cy="14.500" r="1.700" stroke="#3c70b5" /></Bars>
      <div className="ml-[5px]"><Arr /></div>
      <div className="ml-[6px]"><Bars d="M9 5h8M9 9.500h5M9 14h8"><path d="M4 3v5M2.500 12v5m2.500-5v5" stroke="#3c70b5" strokeWidth="1.500" /></Bars></div>
      <div className="ml-[5px]"><Arr /></div>
      <div className="ml-[40px]"><ArrowG r="" /></div><div className="ml-[9px]"><ArrowG r="rotate(180 8 8)" /></div><div className="ml-[9px]"><ArrowG r="rotate(90 8 8)" /></div><div className="ml-[9px]"><ArrowG r="rotate(-90 8 8)" /></div>
    </div>
    <div className="mt-[7px] ml-[5px] h-[2px] shrink-0 border-t border-b border-t-[#aca899] border-b-white" />
    <div className="mt-[5px] flex h-[15px] items-center pl-[4px] tracking-[0px]">
      <div className="w-[106px]"><u>S</u>pacing:</div><div><u>I</u>ndent:</div>
    </div>
    <div className="mt-[7px] flex h-[20px] items-center pl-[7px]">
      <Bars d="M10 6h7M10 10.500h7M3 15h9"><path d="m5 2.500 2.500 3h-5zM5 12.500 2.500 9.500h5z" fill={O} /></Bars>
      <div className="ml-[5px]"><Bars d="M10 5h7M10 9.500h7M3 15h9"><path d="M2.500 2.500h5L5 5.500zM2.500 10.500h5L5 7.500z" fill={O} /></Bars></div>
      <div className="ml-[61px]"><Bars d="M3 4h10M11 8h6M11 12h6M4 16h9"><path d="m2.500 6 4 4-4 4z" fill="#f5b174" stroke={O} /></Bars></div>
      <div className="ml-[5px]"><Bars d="M7 4h9M2 8h5M2 12h5M7 16h9"><path d="m16.500 6-4 4 4 4z" fill="#f5b174" stroke={O} /></Bars></div>
      <div className="ml-[5px]"><Bars d="M3 4h12M10 8h5M10 12h5M11 16h4" /></div>
    </div>
    <div className="mt-[10px] flex h-[27px] items-center pl-[7px]">
      <Bars d="M4 13h11M4 17h11"><IBeam t="translate(9 3)" /></Bars><div className="ml-[4px]"><Spin /></div>
      <div className="ml-[14px]"><Bars d="M3 4h10M12 8h6M12 12h6M4 17h9"><IBeam t="translate(3.500 10.500) rotate(-90)" /></Bars></div><div className="ml-[4px]"><Spin /></div>
    </div>
    <div className="mt-[6px] flex h-[27px] items-center pl-[7px]">
      <Bars d="M4 4h11M4 8h5"><IBeam t="translate(9 11.500)" /></Bars><div className="ml-[4px]"><Spin /></div>
      <div className="ml-[14px]"><Bars d="M3 4h9M3 8h5M3 12h5M4 17h9"><IBeam t="translate(11.500 10.500) rotate(-90)" /></Bars></div><div className="ml-[4px]"><Spin /></div>
    </div>
    <div className="mt-[6px] flex h-[27px] items-center pl-[7px]">
      <Bars d="M9 5h8M9 10h8M9 15h8"><path d="m5 4 2.500 3h-5zM5 15 2.500 12h5z" fill={O} /></Bars><div className="ml-[6px]"><Arr /></div>
      <div className="ml-[74px]"><Bars d="M12 5h4M4 9h12M6 13h10M6 17h8"><IBeam t="translate(2.500 4.500) rotate(-90)" /></Bars></div><div className="ml-[4px]"><Spin /></div>
    </div>
  </div>
);

const Wrench = () => {
  const d = "M3 4.500Q3.500 9 7.500 8.500 10.500 6 7.500 2.500M7.500 8 17 17.500M21.500 19.500q-.5-3.500-4-3-2.500 2 .5 5";
  return (
    <S>
      <path d={d} stroke="#8a8a84" strokeWidth="4.600" strokeLinecap="round" />
      <path d={d} stroke="#f6f5f0" strokeWidth="2.600" strokeLinecap="round" />
    </S>
  );
};

const TabBar = () => (
  <div className="flex w-[40px] shrink-0 flex-col items-center bg-[#ece9d8] pt-[14px]">
    <S w={12} h={12}><path d="M1 2h7M1 5h7M1 8h7" stroke="#333" /><path d="M5 8.500h6L8 11.500z" fill="#15202f" /></S>
    <div className="mt-[12px] h-px w-[24px] bg-[#d9d6c8]" />
    <div className="mt-[3px] flex h-[32px] w-[32px] items-center justify-center rounded-[3px] border border-[#cdcaba]">
      <Wrench />
    </div>
    <div className="mt-[7px]"><S><path d="M1.500 3.500h9v16h-9z" fill="#eee" stroke="#777" /><path d="M3 8h6M3 12h6M3 15h6" stroke="#777" /><path d="M9.500 2.500h13v18h-13z" fill="#7d4a8c" stroke="#542561" /><path d="M13 6v12M13 6h9M14 11h6v5h-6z" stroke="#e3cbe9" strokeWidth="1.300" /></S></div>
    <div className="mt-[11px]"><S><path d="M16 3.500h7M18 8h5M17 14h6M17 18h6" stroke="#d8b52c" /><g transform="translate(-.5 0)"><SparkStar fill="url(#gYellow)" stroke="#c99c16" /></g></S></div>
    <div className="mt-[10px]"><TextBoxIcon /></div>
    <div className="mt-[12px]"><S><path d="M4 1.500h19v5h-1.500l-1-2H15V18h2v1.500H10V18h2V4.500H7l-1 2H4z" fill="#4b5255" /><path d="M1 7.500V22.500h20z" fill="#8ad15a" stroke="#4a951f" /><path d="M5 14.500v4.500h6z" fill="#d9f2ca" stroke="#4a951f" /></S></div>
    <div className="mt-[10px]"><S><path d="m8 6 4-4 4 4" stroke="#888" strokeWidth="1.300" /><rect x="1.500" y="5.500" width="21" height="15" rx="1" fill="#c3862a" stroke="#7c4a0b" /><path d="M4 8h16v10H4z" fill="url(#gSun)" stroke="#774c15" /><path d="M15 18v-5l-3-4m3 4 3-3" stroke="#2b2113" strokeWidth="1.300" /><circle cx="8" cy="16" r="2" fill="#fff3a2" /></S></div>
    <div className="mt-[12px]"><S><circle cx="12" cy="11.500" r="9.800" fill="#f3f3f1" stroke="#777773" strokeWidth="1.800" /><circle cx="12" cy="11.500" r="7.500" fill="#fff" stroke="#bbb" /><path d="m7.500 6.500 6 3.500-3 3z" fill="#d72627" /><path d="m17 17-6.500-4 3-3z" fill="#3d6fb3" /></S></div>
  </div>
);

const StSep = () => <div className="h-[17px] w-[2px] shrink-0 border-r border-l border-r-white border-l-[#aca899]" />;

const Handle = ({ d }: { d: string }) => (
  <div className="flex h-[73px] w-[7px] items-center justify-center bg-[#716f64]">
    <S w={6} h={8}><path d={d} fill="#ece9d8" /></S>
  </div>
);

const WinBtn = ({ c, children }: { c: string; children: React.ReactNode }) => (
  <div className={`${c} flex h-[21px] w-[21px] items-center justify-center rounded-[3px] border border-white`}>
    <S w={19} h={19}>{children}</S>
  </div>
);

export default function App() {
  return (
    <div className="relative flex h-[768px] w-[1024px] flex-col overflow-hidden bg-[#ece9d8] font-['DejaVu_Sans_Condensed','DejaVu_Sans',sans-serif] text-[11px] leading-[14px] text-black">
      <Defs />
      <header className="flex h-[26px] shrink-0 items-center bg-[linear-gradient(#2f8bff_0,#1068ee_3px,#0254e3_6px,#0355e5_13px,#0468ff_22px,#0355e0_25px,#0240ae_26px)] pr-[2px] pl-[2px]">
        <S w={16} h={20}>
          <path d="M2 2.500h8.500l3.500 3.500v12H2z" fill="#fff" stroke="#a3531f" strokeWidth="1.300" /><path d="M11 1.500h4v4z" fill="#7c3811" /><path d="M4.500 9.500h7v5h-7zM5 12h6" fill="#fff" stroke="#a3531f" />
        </S>
        <span className="ml-[4px] flex-1 font-['Noto_Sans','Open_Sans',sans-serif] text-[13px] font-bold tracking-[-0.2px] text-white [text-shadow:1px_1px_1px_#0a1883]">Untitled 1 - LibreOffice Impress</span>
        <div className="flex gap-[2px]">
          <WinBtn c="bg-gradient-to-br from-[#6b90ef] to-[#1d4cd0]"><path d="M4 14h7" stroke="#fff" strokeWidth="3" /></WinBtn>
          <WinBtn c="bg-gradient-to-br from-[#6b90ef] to-[#1d4cd0]"><path d="M7.500 8V4.500h7v6H12" stroke="#fff" /><path d="M7 4h8M4 8.500h8" stroke="#fff" strokeWidth="2" /><path d="M4.500 8.500h7v6h-7z" stroke="#fff" /></WinBtn>
          <WinBtn c="bg-gradient-to-br from-[#ee8c6c] to-[#cf3c12]"><path d="m4.500 4.500 10 10m0-10-10 10" stroke="#fff" strokeWidth="2.200" /></WinBtn>
        </div>
      </header>

      <div className="h-[104px] shrink-0 bg-gradient-to-b from-white to-[#eeeeed]">
        <nav className="flex h-[27px] items-center pl-[5px]">
          {menus.map(([c, a, b, d]) => (
            <span key={b + d} className={`${c} shrink-0 pt-[2px] whitespace-nowrap`}>{a}<u>{b}</u>{d}</span>
          ))}
          <div className="ml-[588px]"><div className="mb-[4px]"><CloseX /></div></div>
        </nav>
        <div className="flex h-[38px] items-center"><Row items={row1} /></div>
        <div className="mt-[1px] flex h-[38px] items-center"><Row items={row2} /></div>
      </div>

      <main className="flex h-[586px] shrink-0 border-t-2 border-[#aeada6]">
        <aside className="flex w-[145px] shrink-0 flex-col border-r border-[#aca899]">
          <div className="flex h-[27px] items-center pl-[2px]">
            <span className="w-[126px] pt-px text-[11.5px] font-bold tracking-[-0.4px]">Slides</span>
            <CloseX />
          </div>
          <div className="ml-[2px] flex h-[553px] w-[138px] border border-[#aca899] border-r-white border-b-white">
            <div className="flex w-[120px] flex-col bg-white">
              <div className="mt-[8px] ml-[8px] flex h-[64px] w-[111px] overflow-hidden border border-r-0 border-[#5b7fb4] bg-gradient-to-b from-[#8ea8d3] to-[#a9bfe9]">
                <span className="w-[24px] shrink-0 pt-[2px] pr-[5px] text-right font-['Liberation_Serif',serif] text-[11px] font-bold text-[#444]">1</span>
                <div className="mt-[4px] ml-px h-[55px] w-[99px] shrink-0 border-2 border-[#c8ccd4] bg-gradient-to-b from-[#4072b8] to-[#16448a] shadow-[0_0_2px_#333]">
                  <div className="mt-[1px] ml-[18px] flex h-[7px] w-[56px] items-center justify-center border-x-4 border-[#315c99] bg-[#294d7d] text-[4px] leading-[6px] font-bold whitespace-nowrap text-white">Lorem Ipsum</div>
                </div>
              </div>
              <div className="mt-auto flex h-4 justify-between bg-[#f9f8f3]">
                <SBtn d="left" /><div className="mr-auto ml-[1px]"><ThumbH c="w-[71px]" /></div><SBtn d="right" />
              </div>
            </div>
            <div className="flex w-4 flex-col bg-[#f9f8f3]">
              <SBtn d="up" />
              <ThumbV c="h-[501px] w-4" />
              <SBtn d="down" />
              <div className="flex-1 bg-[#ece9d8]" />
            </div>
          </div>
        </aside>
        <div className="flex w-[7px] shrink-0 items-center border-r border-[#aca899]">
          <div className="-mt-[1px] -ml-[1px]"><Handle d="M5 0v8L1 4z" /></div>
        </div>

        <section className="flex w-[620px] shrink-0 flex-col border-l border-white">
          <div className="flex h-[567px]">
            <div className="flex w-[604px] items-start overflow-hidden bg-[#dededd] pt-[119px] pl-[10px]"><Slide /></div>
            <div className="flex w-4 shrink-0 flex-col bg-gradient-to-r from-[#f1f0e8] to-[#fefefb]">
              <SBtn d="up" />
              <div className="h-[37px]" />
              <ThumbV c="h-[462px] w-4" />
              <div className="mt-auto mb-px"><SBtn d="down" /></div>
            </div>
          </div>
          <div className="flex h-4 w-[603px] bg-gradient-to-b from-[#f1f0e8] to-[#fefefb]">
            <SBtn d="left" />
            <div className="ml-[188px]"><ThumbH c="w-[195px]" /></div>
            <div className="ml-auto"><SBtn d="right" /></div>
          </div>
        </section>
        <div className="flex w-[8px] shrink-0 items-center border-r border-l border-r-[#aca899] border-l-[#aca899]">
          <div className="-mt-[1px]"><Handle d="M1 0v8l4-4z" /></div>
        </div>
        <Sidebar />
        <TabBar />
      </main>

      <footer className="flex h-[22px] shrink-0 items-center border-t border-[#aca899] pt-[4px] pl-[9px] whitespace-nowrap">
        <span className="w-[206px] tracking-[-0.03px]">TextEdit: Paragraph 1, Row 1, Column 5</span>
        <StSep />
        <div className="ml-[9px]"><S w={15} h={12}><path d="M3.500 0v7M0 3.500h8" stroke="#1313c8" strokeDasharray="2 1" /><path d="M4 9.500h10M13.500 4v6M8 4.500h6" stroke="#000" strokeDasharray="1 1" /></S></div>
        <span className="ml-[4px] w-[183px]">0.55 / 1.50</span>
        <S w={16} h={13}><path d="M1 3v8" stroke="#000" strokeWidth="1.500" strokeDasharray="2 1" /><path d="M5 1.500h9" stroke="#000" strokeWidth="2" strokeDasharray="2 1" /><path d="M5.500 4.500h8v7h-8z" stroke="#000" strokeDasharray="1 1" /></S>
        <span className="ml-[4px] w-[180px] tracking-[-0.1px]">9.92 x 4.15</span>
        <StSep />
        <div className="ml-[6px]"><S w={13} h={12}><path d="M.5.5h9v10h-9z" stroke="#8d8b7c" /><path d="M9 3v5M6.500 4.500l5 2.500m0-2.500-5 2.500" stroke="#c0171d" strokeWidth="1.300" /></S></div>
        <div className="ml-[1px]"><StSep /></div>
        <div className="ml-[27px]"><StSep /></div>
        <span className="ml-[6px] w-[60px]">Slide 1 of 1</span>
        <StSep />
        <span className="ml-[6px] w-[63px]">Metropolis</span>
        <StSep />
        <div className="ml-[4px]"><S w={13} h={13}><path d="M6.500 1v11M1 6.500h11" stroke="#111" strokeWidth="1.500" /><path d="m6.500 0 2.500 3H4zM6.500 13l2.500-3H4zM0 6.500l3-2.500v5zM13 6.500l-3-2.500v5z" fill="#111" /></S></div>
        <div className="ml-[3px]"><StSep /></div>
        <div className="ml-[9px]"><S w={128} h={13}>
          <path d="M0 5.500h8M117 5.500h8M121 1.500v8" stroke="#8f8e86" strokeWidth="2" /><path d="M14 5.500h97M61 0v11" stroke="#9c9b91" strokeWidth="1.500" /><circle cx="39" cy="5.500" r="3.800" fill="#fff" stroke="#888" />
        </S></div>
        <div className="ml-[3px]"><StSep /></div>
        <span className="ml-[5px] tracking-[0.2px]">55%</span>
      </footer>

      <div className="flex h-[30px] shrink-0 items-center bg-[linear-gradient(#3166d4_0,#4a8ff0_2px,#2a63dd_5px,#235ad6_12px,#2460de_26px,#1b46a5_30px)] text-white">
        <div className="flex h-[30px] w-[97px] items-center rounded-r-[9px] bg-[linear-gradient(#2f7a2e_0,#6fb56c_3px,#409a42_7px,#3b973c_20px,#2d7a2d_29px)] pl-[10px] shadow-[inset_-3px_-1px_4px_#205f24]">
          <S w={19} h={20}>
            <path d="M3 4q4-3 7-1L8.500 9.500Q5 7.500 1.500 9z" fill="#ec6a2c" /><path d="M11 3.500q3 2 7 .3L16.500 10q-4 1.500-7 0z" fill="#8cc63f" /><path d="M1.200 10.500q4-2 7 0L7 16.500q-3-2-7 0z" fill="#5a93ee" /><path d="M9.200 11q3 2 7 0L15 17q-4 2-7 0z" fill="#fbc93c" />
          </S>
          <span className="ml-[5px] font-['Open_Sans','Noto_Sans',sans-serif] text-[17px] leading-[20px] font-bold italic tracking-[-0.3px] [text-shadow:1px_1px_2px_#1c4a1c]">start</span>
        </div>
        <div className="mt-px ml-[9px] flex h-[24px] w-[159px] items-center rounded-[2px] bg-gradient-to-b from-[#5a98f8] via-[#3c81f3] to-[#3a7df0] pl-[9px] shadow-[inset_0_0_1px_#17409a]">
          <S w={18} h={14}><path d="m1 6 7-3 9 3-7 4z" fill="#e9e9e9" stroke="#777" strokeWidth=".6" /><path d="m1 6 9 4v3L1 8.500zM17 6v2.500L10 13v-3z" fill="#858585" /></S>
          <span className="ml-[2px] tracking-[0.1px]">SOFT (E:)</span>
        </div>
        <div className="mt-px ml-[2px] flex h-[24px] w-[159px] items-center rounded-[2px] bg-gradient-to-b from-[#1a479d] to-[#1f55bf] pl-[9px] shadow-[inset_1px_1px_2px_#0c2f7c]">
          <S w={16} h={18}><path d="M2.500 2.500h8l3 3v11h-11z" fill="#fff" stroke="#a3531f" strokeWidth="1.300" /><path d="M11 1.500h3.500V5z" fill="#7c3811" /><path d="M5 8.500h6v5H5zM5 11h6" fill="#fff" stroke="#a3531f" /></S>
          <span className="ml-[4px] pt-[2px] tracking-[-0.03px]">Untitled 1 - LibreOffic...</span>
        </div>
        <div className="ml-auto flex h-[30px] w-[111px] items-center border-l border-[#0c3a9a] bg-[linear-gradient(#2b9df0_0,#45b5f8_2px,#1591ec_6px,#1390ea_24px,#0f6fc8_30px)] pl-[10px]">
          <S w={14} h={16}><path d="M7 1q3 2 6 1.500Q14 11 7 15 0 11 1 2.500 4 3 7 1z" fill="#d6242b" stroke="#f2c2c2" strokeWidth=".8" /><path d="m4.500 5 5 5m0-5-5 5" stroke="#fff" strokeWidth="1.800" /></S>
          <div className="ml-[3px]"><S w={18} h={16}><circle cx="7.500" cy="7" r="5.500" fill="#8a8a88" stroke="#ccc" /><circle cx="6.500" cy="6.500" r="3" fill="#444" /><path d="m11 14 3-3m-1 4 3-4" stroke="#9fb8ff" /></S></div>
          <span className="ml-[8px] pt-[2px] tracking-[-0.05px]">3:24 PM</span>
        </div>
      </div>

      <div className="absolute left-[425px] top-[637px]">
        <S w={15} h={24}><path d="M2.500 3v17l4-3.500 3 6 3-1.500-3-5.500h4.500z" fill="#888" opacity=".5" /><path d="M.8 1.500v16.300l3.900-3.600 3 6.200 2.500-1.200-2.900-6h5z" fill="#fff" stroke="#111" /></S>
      </div>
    </div>
  );
}
